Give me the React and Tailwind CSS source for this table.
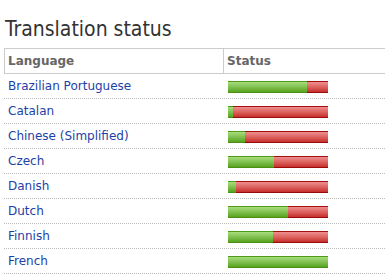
const rows = [
  { name: 'Brazilian Portuguese', pct: 79 },
  { name: 'Catalan', pct: 5 },
  { name: 'Chinese (Simplified)', pct: 17 },
  { name: 'Czech', pct: 46 },
  { name: 'Danish', pct: 8 },
  { name: 'Dutch', pct: 60 },
  { name: 'Finnish', pct: 45 },
  { name: 'French', pct: 100 },
];

function Bar({ pct }) {
  return (
    <div className="flex w-[100px] h-[12px]">
      <div
        className="h-full border-t border-b border-t-[#4e9a18] border-b-[#4a9016] bg-linear-to-b from-[#a8de7c] to-[#58a31a]"
        style={{ width: `${pct}%` }}
      />
      {pct < 100 && (
        <div className="h-full flex-1 border-t border-b border-t-[#a31010] border-b-[#9a0c0c] bg-linear-to-b from-[#ee8f8f] to-[#c72c2c]" />
      )}
    </div>
  );
}

export default function App() {
  return (
    <div className="bg-white w-[385px] h-[276px] overflow-hidden font-['DejaVu_Sans',sans-serif]">
      <h1 className="pt-[17px] pl-[5px] text-[21px] leading-[24px] text-[#333] font-normal font-['DejaVu_Sans_Condensed','DejaVu_Sans',sans-serif] [font-stretch:condensed]">
        Translation status
      </h1>
      <div className="mt-[7px] ml-[4px]">
        <div className="flex h-[26px] border-t border-b border-l border-[#ccc] text-[12px] font-bold text-[#666]">
          <div className="w-[219px] pl-[3px] flex items-center border-r border-[#ccc]">Language</div>
          <div className="flex-1 pl-[3px] flex items-center">Status</div>
        </div>
        {rows.map((r) => (
          <div key={r.name} className="flex h-[25px] border-b border-dotted border-[#bbb] text-[12px]">
            <div className="w-[220px] pl-[4px] flex items-center text-[#1d3fa6]">{r.name}</div>
            <div className="flex-1 pl-[4px] flex items-center pt-[1px]">
              <Bar pct={r.pct} />
            </div>
          </div>
        ))}
      </div>
    </div>
  );
}
